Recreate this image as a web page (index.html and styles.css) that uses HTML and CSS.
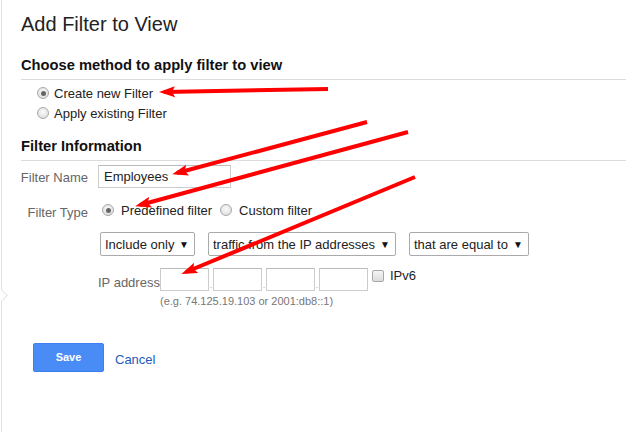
FILE: index.html
```html
<!DOCTYPE html>
<html>
<head>
<meta charset="utf-8">
<link rel="stylesheet" href="styles.css">
</head>
<body>
<div class="panel">
  <span class="notch"></span>
  <h1 class="title">Add Filter to View</h1>
  <h2 class="section">Choose method to apply filter to view</h2>
  <div class="options">
    <div class="opt"><span class="radio on"></span>Create new Filter</div>
    <div class="opt"><span class="radio"></span>Apply existing Filter</div>
  </div>
  <h2 class="section s2">Filter Information</h2>
  <div class="form">
    <div class="row r-name">
      <span class="lbl">Filter Name</span>
      <div class="field">Employees</div>
    </div>
    <div class="row r-type">
      <span class="lbl">Filter Type</span>
      <div class="types">
        <span class="radio on"></span><span class="tlabel">Predefined filter</span>
        <span class="radio"></span><span class="tlabel">Custom filter</span>
      </div>
    </div>
    <div class="row r-sel">
      <span class="lbl"></span>
      <div class="selects">
        <div class="sel w1"><span>Include only</span><span class="tri">&#9660;</span></div>
        <div class="sel w2"><span>traffic from the IP addresses</span><span class="tri">&#9660;</span></div>
        <div class="sel w3"><span>that are equal to</span><span class="tri">&#9660;</span></div>
      </div>
    </div>
    <div class="row r-ip">
      <span class="lbl"></span>
      <span class="iplbl">IP address</span>
      <div class="ipcol">
        <div class="ipline">
          <span class="ipbox"></span><span class="dot">.</span>
          <span class="ipbox"></span><span class="dot">.</span>
          <span class="ipbox"></span><span class="dot">.</span>
          <span class="ipbox"></span>
          <span class="check"></span><span class="v6">IPv6</span>
        </div>
        <div class="hint">(e.g. 74.125.19.103 or 2001:db8::1)</div>
      </div>
    </div>
  </div>
  <div class="actions">
    <span class="save">Save</span>
    <span class="cancel">Cancel</span>
  </div>
</div>
<svg class="arrows" width="626" height="432" viewBox="0 0 626 432">
  <defs>
    <marker id="ah" markerUnits="userSpaceOnUse" markerWidth="16" markerHeight="12" refX="11" refY="6" orient="auto">
      <path d="M0,0.5 L16,6 L0,11.5 L3,6 Z" fill="#ff0000"/>
    </marker>
  </defs>
  <g stroke="#ff0000" stroke-width="4" fill="none" marker-end="url(#ah)">
    <line x1="328" y1="89" x2="164" y2="92"/>
    <line x1="367" y1="122" x2="177" y2="173"/>
    <line x1="408" y1="132" x2="140" y2="205"/>
    <line x1="415" y1="177" x2="186" y2="272"/>
  </g>
</svg>
</body>
</html>
```
FILE: styles.css
```css
html, body {
  margin: 0;
  padding: 0;
  background: #fff;
}
body {
  font-family: "Liberation Sans", Arial, sans-serif;
  color: #222;
  width: 626px;
  height: 432px;
  overflow: hidden;
  position: relative;
}
.panel {
  position: relative;
  box-sizing: border-box;
  height: 432px;
  margin-left: 1px;
  border-left: 1px solid #e0e0e0;
  padding: 11px 0 0 19px;
}
.notch {
  position: absolute;
  left: -5px;
  top: 291px;
  width: 8px;
  height: 8px;
  background: #fff;
  border-top: 1px solid #e4e4e4;
  border-right: 1px solid #e4e4e4;
  transform: rotate(45deg);
}
.title {
  margin: 0;
  font-size: 20px;
  font-weight: normal;
  line-height: 26px;
  color: #222;
}
.section {
  margin: 18px 0 0;
  font-size: 14.7px;
  font-weight: bold;
  line-height: 20px;
  padding-bottom: 4px;
  border-bottom: 1px solid #dcdcdc;
  color: #111;
}
.s2 { margin-top: 13px; }
.options {
  padding: 3px 0 0 16px;
}
.opt {
  display: flex;
  align-items: center;
  height: 20px;
  font-size: 13px;
}
.radio {
  display: inline-block;
  box-sizing: border-box;
  width: 12px;
  height: 12px;
  border-radius: 50%;
  border: 1px solid #a8a8a8;
  background: radial-gradient(circle at 50% 40%, #fafafa 0%, #e6e6e6 60%, #d4d4d4 100%);
  position: relative;
  flex: none;
}
.radio.on::after {
  content: "";
  position: absolute;
  left: 2.5px;
  top: 2.5px;
  width: 5px;
  height: 5px;
  border-radius: 50%;
  background: #666;
}
.opt .radio { margin-right: 5px; }
.form { padding-top: 4px; }
.row {
  display: flex;
  align-items: center;
  font-size: 13px;
}
.lbl {
  display: flex;
  justify-content: flex-end;
  white-space: nowrap;
  width: 67px;
  margin-right: 10px;
  color: #666;
  flex: none;
}
.field {
  box-sizing: border-box;
  width: 133px;
  height: 23px;
  border: 1px solid #ccc;
  border-top-color: #bbb;
  padding-left: 5px;
  line-height: 21px;
  color: #222;
}
.r-name .lbl { padding-top: 1px; }
.r-type {
  margin-top: 12px;
  height: 20px;
}
.r-type .lbl { padding-top: 4px; }
.types {
  display: flex;
  align-items: center;
  padding-left: 4px;
}
.tlabel { margin-left: 7px; margin-right: 8px; }
.r-sel { margin-top: 12px; }
.selects {
  display: flex;
  gap: 13px;
  padding-left: 2px;
}
.sel {
  box-sizing: border-box;
  height: 24px;
  border: 1px solid #aaa;
  border-radius: 2px;
  display: flex;
  align-items: center;
  justify-content: space-between;
  padding: 0 5px 0 4px;
  color: #222;
  background: #fff;
}
.tri { font-size: 10px; color: #111; }
.w1 { width: 95px; }
.w2 { width: 188px; }
.w3 { width: 120px; }
.r-ip {
  margin-top: 12px;
  align-items: flex-start;
}
.iplbl {
  color: #666;
  width: 62px;
  padding-top: 7px;
  flex: none;
  white-space: nowrap;
}
.ipline {
  display: flex;
  align-items: flex-start;
}
.ipbox {
  box-sizing: border-box;
  width: 49px;
  height: 23px;
  border: 1px solid #ccc;
  border-top-color: #bbb;
}
.dot {
  width: 4px;
  font-size: 9px;
  line-height: 9px;
  color: #aaa;
  text-align: center;
  padding-top: 13px;
}
.check {
  box-sizing: border-box;
  width: 12px;
  height: 12px;
  border: 1px solid #a8a8a8;
  border-radius: 2px;
  background: linear-gradient(#f4f4f4, #dcdcdc);
  margin: 2px 0 0 4px;
}
.v6 {
  margin-left: 6px;
  line-height: 15px;
  color: #222;
}
.hint {
  font-size: 11px;
  color: #777;
  line-height: 14px;
  margin-top: 3px;
}
.actions {
  display: flex;
  align-items: center;
  margin-top: 35px;
  padding-left: 12px;
}
.save {
  box-sizing: border-box;
  width: 71px;
  height: 29px;
  border: 1px solid #3d7fee;
  border-radius: 2px;
  background: #4a8cf6;
  color: #fff;
  font-size: 11px;
  font-weight: bold;
  text-align: center;
  line-height: 27px;
}
.cancel {
  margin-left: 11px;
  font-size: 13px;
  color: #1f5bb8;
  padding-top: 3px;
}
.arrows {
  position: absolute;
  left: 0;
  top: 0;
  pointer-events: none;
}
```
